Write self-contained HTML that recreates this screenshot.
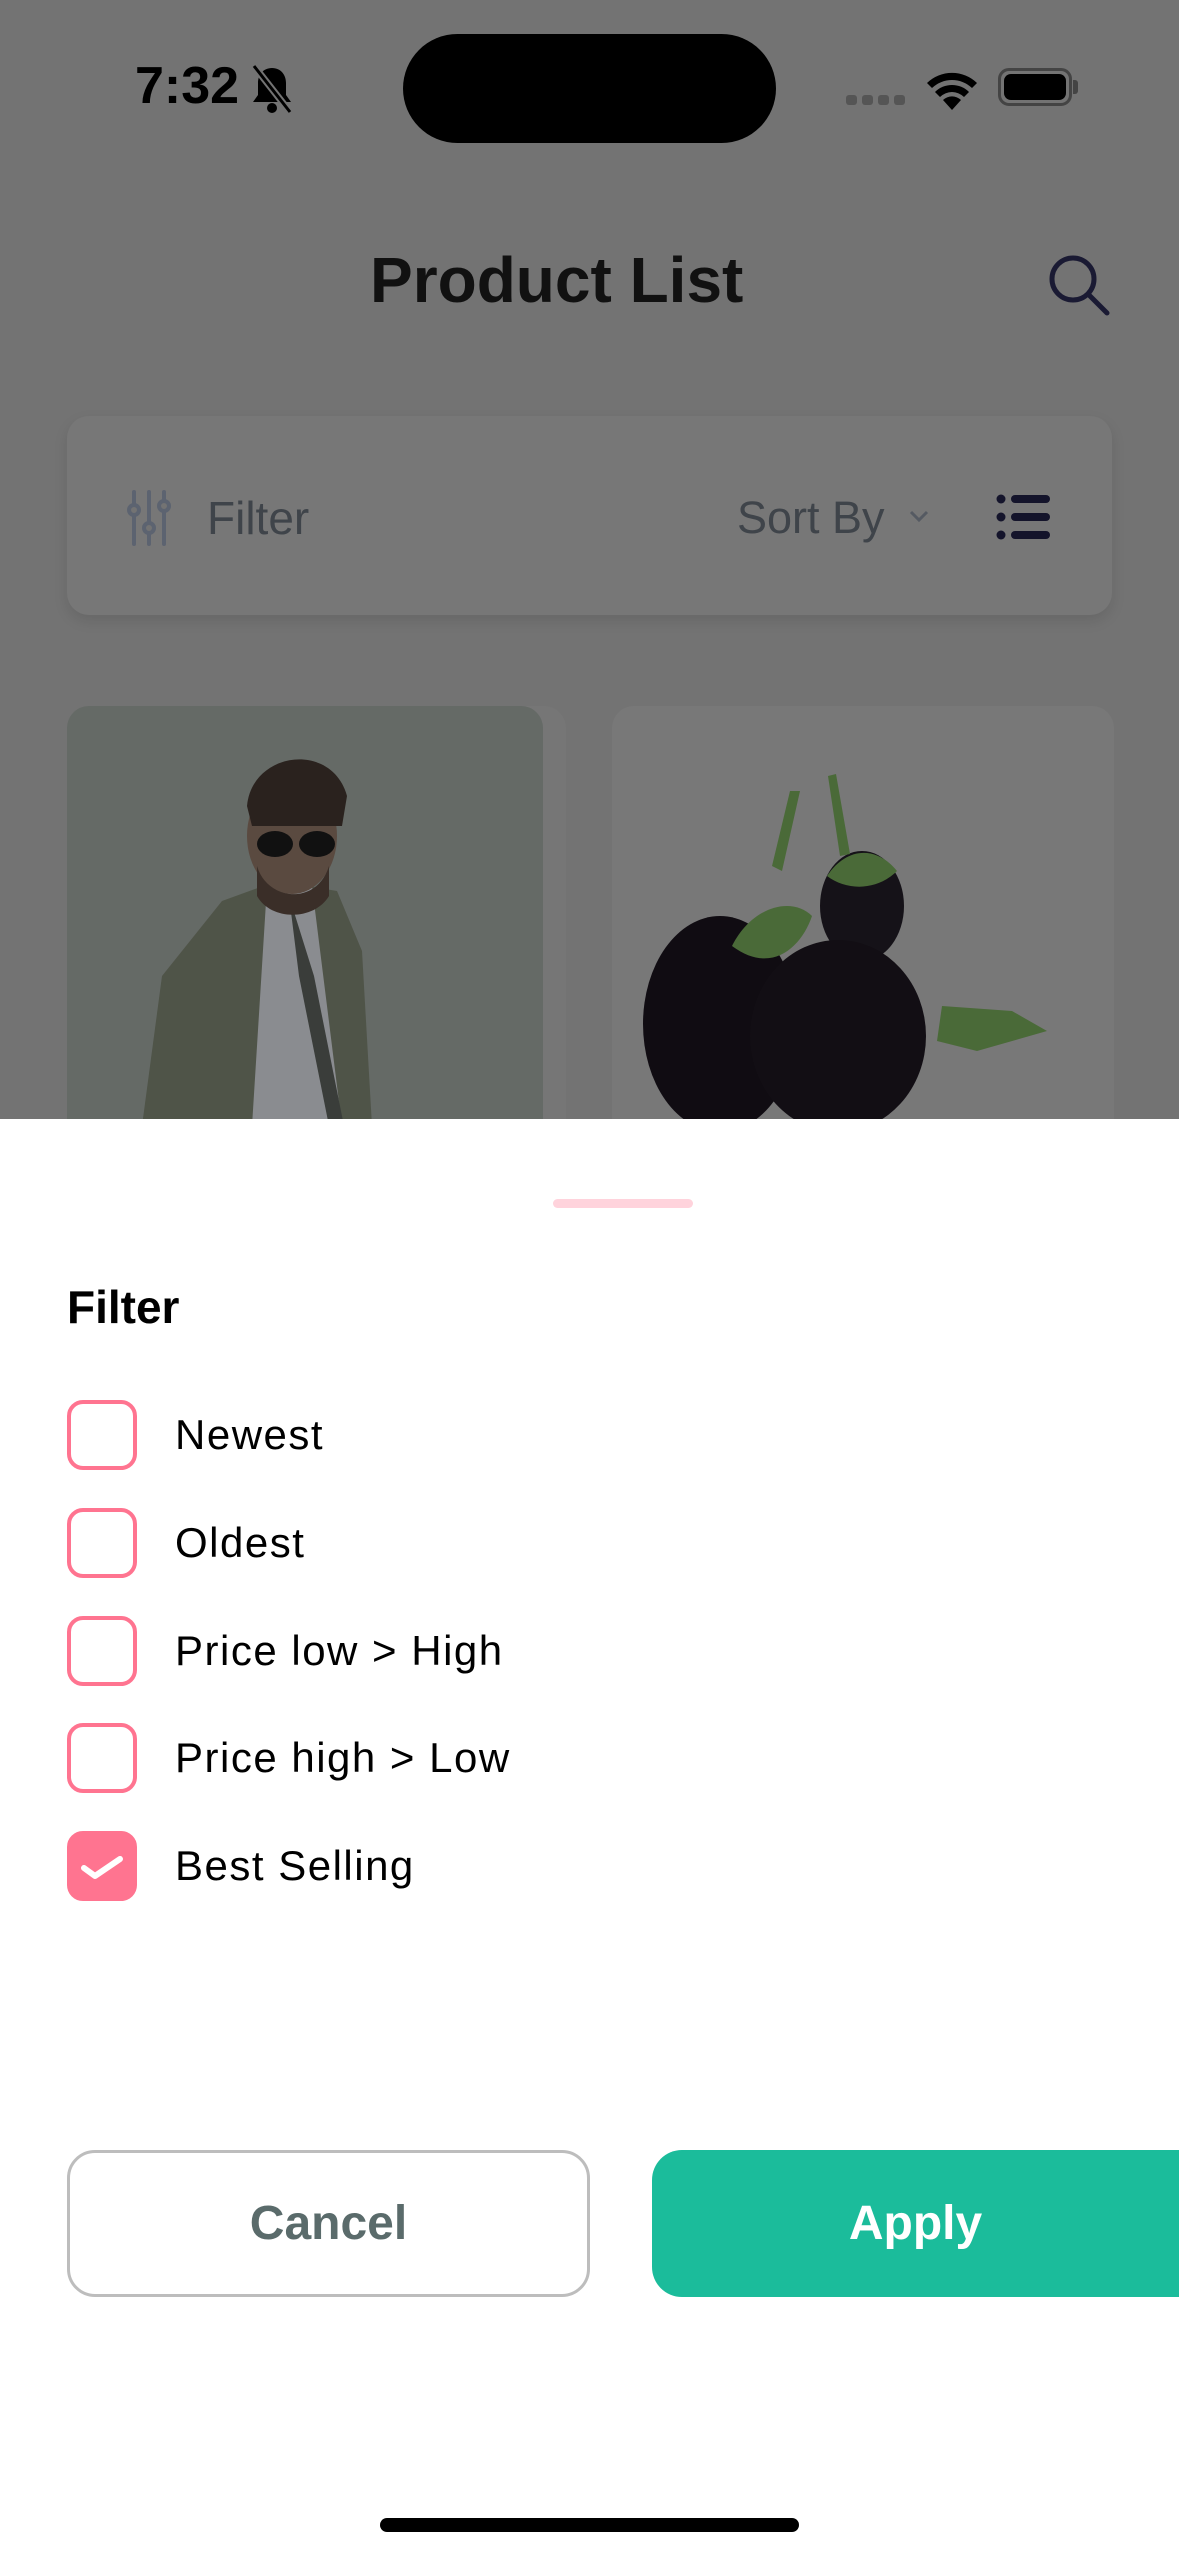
<!DOCTYPE html>
<html><head><meta charset="utf-8"><style>
*{margin:0;padding:0;box-sizing:border-box}
body{width:1179px;height:2556px;overflow:hidden;background:#737373;font-family:"Liberation Sans",sans-serif;position:relative}
.abs{position:absolute}
.cb{position:absolute;left:67px;width:70px;height:70px;border:4px solid #ff7490;border-radius:16px}
.lbl{position:absolute;left:175px;font-size:42px;letter-spacing:1.5px;color:#000;line-height:50px}
</style></head><body>
<div class="abs" style="left:135px;top:58px;font-size:52px;font-weight:bold;color:#000;line-height:56px">7:32</div>
<svg class="abs" style="left:250px;top:64px" width="44" height="50" viewBox="0 0 44 50"><path d="M22 4c-9 0-14 7-14 15v12l-5 7h38l-5-7V19c0-8-5-15-14-15z" fill="#000"/><circle cx="22" cy="44" r="5" fill="#000"/><line x1="4" y1="2" x2="40" y2="48" stroke="#737373" stroke-width="7"/><line x1="4" y1="2" x2="40" y2="48" stroke="#000" stroke-width="3"/></svg>
<div class="abs" style="left:403px;top:34px;width:373px;height:109px;background:#000;border-radius:55px"></div>
<div class="abs" style="left:846px;top:95px;width:59px;height:10px;display:flex;gap:5px"><i style="flex:1;background:#555;border-radius:3px"></i><i style="flex:1;background:#555;border-radius:3px"></i><i style="flex:1;background:#555;border-radius:3px"></i><i style="flex:1;background:#555;border-radius:3px"></i></div>
<svg class="abs" style="left:924px;top:68px" width="56" height="42" viewBox="0 0 56 42"><path d="M28 42L19 32a13 13 0 0 1 18 0z" fill="#000"/><path d="M11 24a24 24 0 0 1 34 0l-5 5a17 17 0 0 0-24 0z" fill="#000"/><path d="M3 15a36 36 0 0 1 50 0l-5 5a29 29 0 0 0-40 0z" fill="#000"/></svg>
<div class="abs" style="left:998px;top:68px;width:74px;height:38px;border:3px solid #444;border-radius:11px;padding:3px"><div style="width:100%;height:100%;background:#000;border-radius:7px"></div></div>
<div class="abs" style="left:1073px;top:80px;width:5px;height:14px;background:#444;border-radius:0 3px 3px 0"></div>
<div class="abs" style="left:370px;top:240px;font-size:64px;font-weight:bold;color:#111;line-height:80px">Product List</div>
<svg class="abs" style="left:1044px;top:250px" width="70" height="70" viewBox="0 0 70 70"><circle cx="29" cy="29" r="21" fill="none" stroke="#1a1a33" stroke-width="5"/><line x1="45" y1="45" x2="63" y2="63" stroke="#1a1a33" stroke-width="5" stroke-linecap="round"/></svg>
<div class="abs" style="left:67px;top:416px;width:1045px;height:199px;background:#777;border-radius:22px;box-shadow:0 6px 14px rgba(0,0,0,0.1)"></div>
<svg class="abs" style="left:126px;top:490px" width="46" height="56" viewBox="0 0 46 56"><g stroke="#5c6370" stroke-width="4" fill="none" stroke-linecap="round"><line x1="8" y1="2" x2="8" y2="54"/><line x1="23" y1="2" x2="23" y2="54"/><line x1="38" y1="2" x2="38" y2="54"/></g><g fill="#737373" stroke="#5c6370" stroke-width="4"><circle cx="8" cy="20" r="5"/><circle cx="23" cy="38" r="5"/><circle cx="38" cy="16" r="5"/></g></svg>
<div class="abs" style="left:207px;top:490px;font-size:46px;color:#3f444a;line-height:56px">Filter</div>
<div class="abs" style="left:737px;top:490px;font-size:45px;color:#3f444a;line-height:56px">Sort By</div>
<svg class="abs" style="left:908px;top:508px" width="22" height="16" viewBox="0 0 22 16"><path d="M3 4l8 8 8-8" stroke="#555a62" stroke-width="3" fill="none"/></svg>
<svg class="abs" style="left:996px;top:494px" width="56" height="46" viewBox="0 0 56 46"><g fill="#14142b"><circle cx="5" cy="5" r="4.5"/><circle cx="5" cy="23" r="4.5"/><circle cx="5" cy="41" r="4.5"/><rect x="15" y="1" width="39" height="8" rx="4"/><rect x="15" y="19" width="39" height="8" rx="4"/><rect x="15" y="37" width="39" height="8" rx="4"/></g></svg>
<div class="abs" style="left:67px;top:706px;width:499px;height:500px;background:#767676;border-radius:22px"></div>
<div class="abs" style="left:67px;top:706px;width:476px;height:500px;background:#656a66;border-radius:22px 22px 0 0;overflow:hidden">
<svg width="476" height="420" viewBox="0 0 476 420"><path d="M75 420l20-150 60-75 55-20 60 10 25 60 10 175z" fill="#4f5448"/><path d="M200 180l45 0 30 240h-90z" fill="#8a8c90"/><path d="M222 190l25 80 30 150h-15l-30-150z" fill="#3a3d3a"/><ellipse cx="225" cy="130" rx="45" ry="58" fill="#5a4a40"/><path d="M180 100c5-55 85-65 100-10l-5 30h-90z" fill="#2a221e"/><ellipse cx="208" cy="138" rx="18" ry="13" fill="#111"/><ellipse cx="250" cy="138" rx="18" ry="13" fill="#111"/><path d="M190 160c10 35 60 40 72 0l0 30c-15 25-58 25-72 0z" fill="#3a2e28"/></svg></div>
<div class="abs" style="left:612px;top:706px;width:502px;height:500px;background:#787878;border-radius:22px 22px 0 0;overflow:hidden">
<svg width="502" height="420" viewBox="0 0 502 420"><ellipse cx="250" cy="200" rx="42" ry="55" fill="#151218"/><ellipse cx="108" cy="318" rx="77" ry="108" fill="#100c12"/><ellipse cx="226" cy="330" rx="88" ry="96" fill="#120e14"/><path d="M160 160l18-75 10 0-18 80z" fill="#4a6a38"/><path d="M120 240c20-40 60-50 80-30-10 30-40 60-80 30z" fill="#4a6a38"/><path d="M228 150l-12-80 8-2 14 80z" fill="#4a6a38"/><path d="M215 170c20-30 50-30 70-5-20 20-50 20-70 5z" fill="#4a6a38"/><path d="M330 300l70 5 35 20-70 20-40-10z" fill="#4a6a38"/></svg></div>
<div class="abs" style="left:0;top:1119px;width:1179px;height:1437px;background:#fff"></div>
<div class="abs" style="left:553px;top:1199px;width:140px;height:9px;background:#ffd3dc;border-radius:5px"></div>
<div class="abs" style="left:67px;top:1280px;font-size:46px;font-weight:bold;color:#000;line-height:54px">Filter</div>
<div class="cb" style="top:1400px"></div><div class="lbl" style="top:1410px">Newest</div>
<div class="cb" style="top:1508px"></div><div class="lbl" style="top:1518px">Oldest</div>
<div class="cb" style="top:1616px"></div><div class="lbl" style="top:1626px">Price low &gt; High</div>
<div class="cb" style="top:1723px"></div><div class="lbl" style="top:1733px">Price high &gt; Low</div>
<div class="cb" style="top:1831px;background:#ff7490"></div>
<svg class="abs" style="left:67px;top:1831px" width="70" height="70" viewBox="0 0 70 70"><path d="M17 37l11 8 25-17" stroke="#fff" stroke-width="6" fill="none" stroke-linecap="round" stroke-linejoin="round"/></svg>
<div class="lbl" style="top:1841px">Best Selling</div>
<div class="abs" style="left:67px;top:2150px;width:523px;height:147px;border:3px solid #bdbdbd;border-radius:28px;display:flex;align-items:center;justify-content:center;font-size:48px;font-weight:bold;color:#5a6b6b">Cancel</div>
<div class="abs" style="left:652px;top:2150px;width:527px;height:147px;background:#1bbc9b;border-radius:30px 0 0 30px;display:flex;align-items:center;justify-content:center;font-size:48px;font-weight:bold;color:#fff">Apply</div>
<div class="abs" style="left:380px;top:2518px;width:419px;height:14px;background:#000;border-radius:7px"></div>
</body></html>
